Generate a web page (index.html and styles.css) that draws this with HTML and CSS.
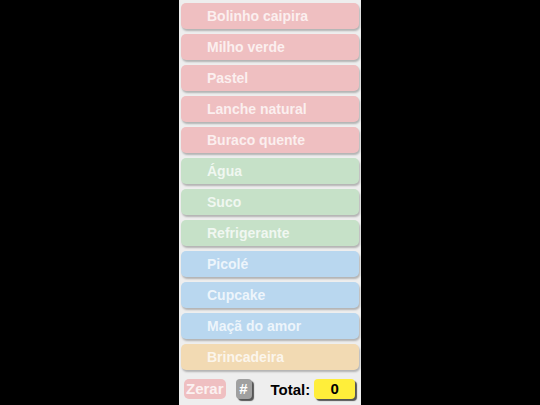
FILE: index.html
```html
<!DOCTYPE html>
<html lang="pt">
<head>
  <meta charset="UTF-8" />
  <title>Cantina</title>
  <link rel="stylesheet" href="styles.css">
</head>
<body>
  <div class="coluna">
    <div class="item rosa">Bolinho caipira</div>
    <div class="item rosa">Milho verde</div>
    <div class="item rosa">Pastel</div>
    <div class="item rosa">Lanche natural</div>
    <div class="item rosa">Buraco quente</div>
    <div class="item verde">Água</div>
    <div class="item verde">Suco</div>
    <div class="item verde">Refrigerante</div>
    <div class="item azul">Picolé</div>
    <div class="item azul">Cupcake</div>
    <div class="item azul">Maçã do amor</div>
    <div class="item laranja">Brincadeira</div>

    <div class="rodape">
      <div class="zerar">Zerar</div>
      <div class="contar">#</div>
      <div class="total">Total:</div>
      <div class="valor">0</div>
    </div>
  </div>
</body>
</html>
```

FILE: styles.css
```css
body {
  margin: 0;
  background: #000;
  font-family: "Liberation Sans", Arial, sans-serif;
}

.coluna {
  width: 182px;
  height: 405px;
  margin: 0 auto;
  background: #eeeeee;
  padding-top: 3px;
  box-sizing: border-box;
}

.item {
  height: 26px;
  line-height: 26px;
  margin: 0 2px 5px 2px;
  padding-left: 26px;
  border-radius: 5px;
  font-size: 14px;
  font-weight: bold;
  color: rgba(255, 255, 255, 0.75);
  box-shadow: 1px 2px 2px rgba(0, 0, 0, 0.25);
}

.rosa { background: #efbfc1; }
.verde { background: #c6e1c8; }
.azul { background: #b9d7ef; }
.laranja { background: #f2dab3; }

.rodape {
  display: flex;
  align-items: center;
  padding: 4px 0 0 5px;
  font-size: 15px;
  font-weight: bold;
}

.zerar {
  background: #efbfc1;
  color: rgba(255, 255, 255, 0.8);
  height: 20px;
  line-height: 20px;
  padding: 0 2px;
  border-radius: 5px;
}

.contar {
  margin-left: 10px;
  background: #a0a0a0;
  color: #fff;
  width: 16px;
  height: 20px;
  line-height: 20px;
  text-align: center;
  border-radius: 4px;
  box-shadow: 2px 2px 1px #555;
}

.total {
  margin-left: 19px;
  color: #000;
}

.valor {
  margin-left: 4px;
  width: 41px;
  height: 20px;
  line-height: 20px;
  text-align: center;
  background: #ffee3a;
  border-radius: 4px;
  box-shadow: 2px 2px 1px #555;
  color: #000;
}
```
